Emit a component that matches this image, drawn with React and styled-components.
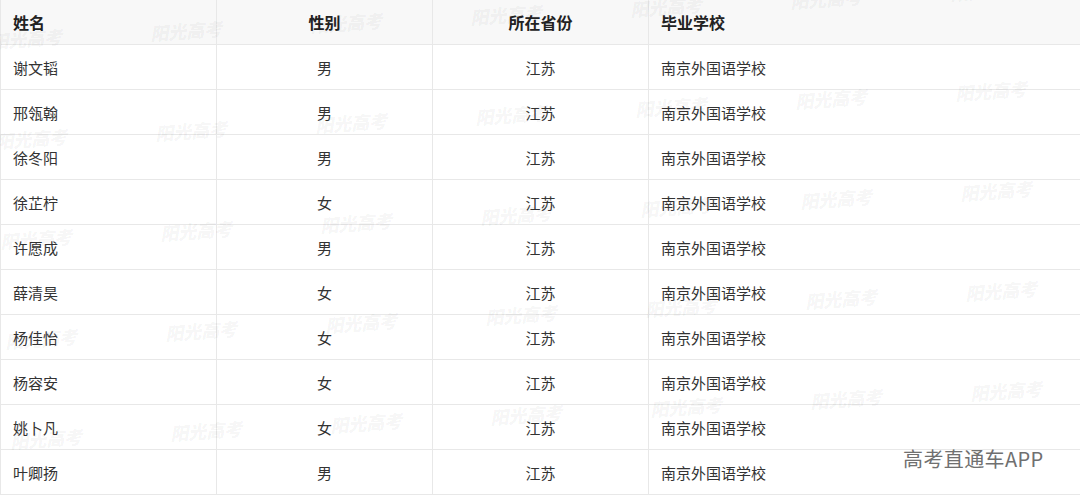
import React from 'react';
import styled, { createGlobalStyle } from 'styled-components';

const GlobalStyle = createGlobalStyle`
  html, body {
    margin: 0;
    padding: 0;
    background: #ffffff;
  }
  body {
    font-family: 'Noto Sans CJK SC', 'Noto Sans', sans-serif;
    color: #333333;
  }
`;

const Page = styled.div`
  position: relative;
  width: 1080px;
  height: 497px;
  overflow: hidden;
  background: #ffffff;
`;

const Table = styled.table`
  width: 1080px;
  border-collapse: collapse;
  table-layout: fixed;
`;

const Col = styled.col`
  width: ${(p) => p.w}px;
`;

const HeadCell = styled.th`
  height: 44px;
  padding: 0 12px;
  border: 1px solid #e8e8e8;
  border-top: none;
  background: #f8f8f8;
  font-size: 16px;
  font-weight: 700;
  color: #222222;
  text-align: ${(p) => (p.center ? 'center' : 'left')};
  vertical-align: middle;
`;

const Cell = styled.td`
  height: 44px;
  padding: 0 12px;
  border: 1px solid #e8e8e8;
  font-size: 15px;
  color: #333333;
  text-align: ${(p) => (p.center ? 'center' : 'left')};
  vertical-align: middle;
`;

const Mark = styled.span`
  position: absolute;
  width: 76px;
  font-size: 18px;
  font-weight: 900;
  font-style: italic;
  color: rgba(0, 0, 0, 0.05);
  white-space: nowrap;
  transform: translateY(-50%) rotate(-4deg);
  pointer-events: none;
  user-select: none;
`;

const Brand = styled.div`
  position: absolute;
  left: 903px;
  top: 444px;
  font-size: 20px;
  font-weight: 400;
  color: #707070;
  letter-spacing: 0.4px;
  text-shadow: 0 0 2px #ffffff;
  pointer-events: none;
`;

const columns = [
  { id: 1, title: '姓名', center: false, width: 216 },
  { id: 2, title: '性别', center: true, width: 216 },
  { id: 3, title: '所在省份', center: true, width: 216 },
  { id: 4, title: '毕业学校', center: false, width: 432 },
];

const students = [
  { name: '谢文韬', sex: '男' },
  { name: '邢瓴翰', sex: '男' },
  { name: '徐冬阳', sex: '男' },
  { name: '徐芷柠', sex: '女' },
  { name: '许愿成', sex: '男' },
  { name: '薛清昊', sex: '女' },
  { name: '杨佳怡', sex: '女' },
  { name: '杨容安', sex: '女' },
  { name: '姚卜凡', sex: '女' },
  { name: '叶卿扬', sex: '男' },
];

// 水印位置：每行右移 5px、下移 100px，每列右移 160px、上移 8px
const marks = [];
for (let r = 0; r < 5; r++) {
  for (let c = 0; c < 7; c++) {
    marks.push({ key: `${r}-${c}`, x: -10 + 160 * c + 5 * r, y: 38 + 100 * r - 8 * c });
  }
}

export default function App() {
  return (
    <Page>
      <GlobalStyle />
      <Table>
        <colgroup>
          {columns.map((col) => (
            <Col key={col.id} w={col.width} />
          ))}
        </colgroup>
        <thead>
          <tr>
            {columns.map((col) => (
              <HeadCell key={col.id} center={col.center}>
                {col.title}
              </HeadCell>
            ))}
          </tr>
        </thead>
        <tbody>
          {students.map((s) => (
            <tr key={s.name}>
              <Cell>{s.name}</Cell>
              <Cell center>{s.sex}</Cell>
              <Cell center>江苏</Cell>
              <Cell>南京外国语学校</Cell>
            </tr>
          ))}
        </tbody>
      </Table>
      {marks.map((m) => (
        <Mark key={m.key} style={{ left: m.x, top: m.y }}>
          阳光高考
        </Mark>
      ))}
      <Brand>高考直通车APP</Brand>
    </Page>
  );
}
